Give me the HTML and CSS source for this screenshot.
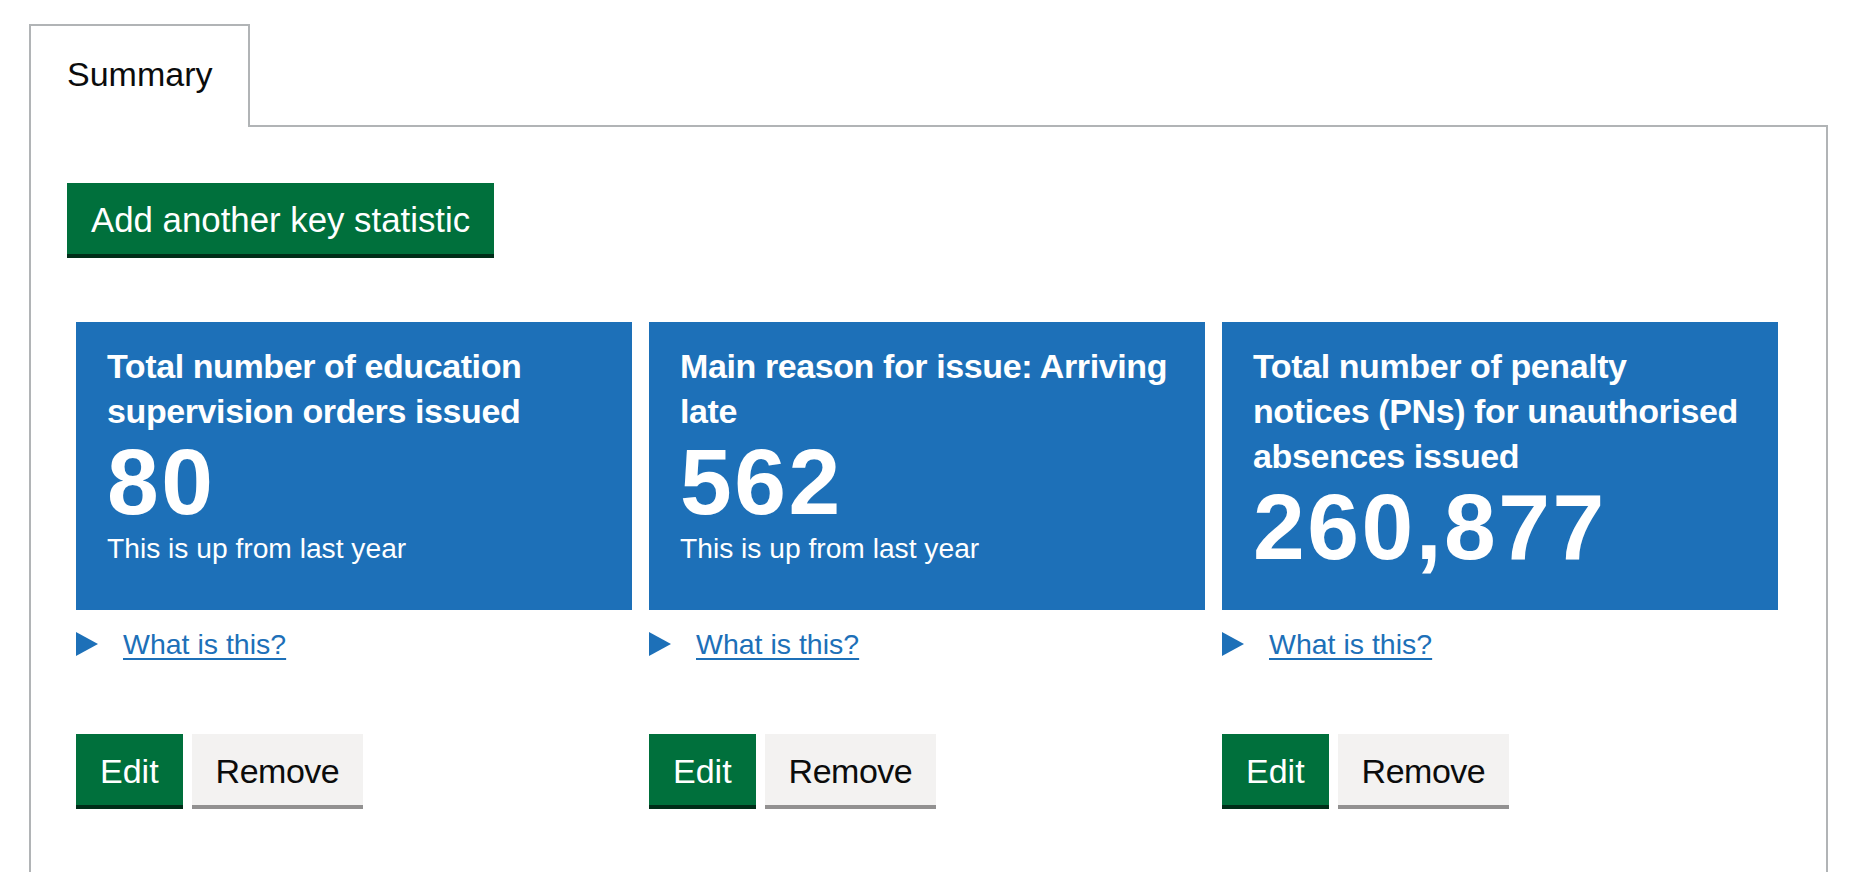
FILE: index.html
```html
<!DOCTYPE html>
<html lang="en">
<head>
<meta charset="utf-8">
<title>Key statistics – Summary</title>
<link rel="stylesheet" href="styles.css">
</head>
<body>
<div class="tabs">
  <ul class="tabs-list">
    <li class="tab tab--selected">Summary</li>
  </ul>
  <section class="panel">
    <button class="btn btn--add" type="button">Add another key statistic</button>
    <div class="stats">
      <div class="stat">
        <div class="tile">
          <h3 class="tile-title">Total number of education supervision orders issued</h3>
          <p class="tile-value">80</p>
          <p class="tile-trend">This is up from last year</p>
        </div>
        <details class="help"><summary><span class="arrow"></span><span class="help-link">What is this?</span></summary></details>
        <div class="actions">
          <button class="btn" type="button">Edit</button>
          <button class="btn btn--secondary" type="button">Remove</button>
        </div>
      </div>
      <div class="stat">
        <div class="tile">
          <h3 class="tile-title">Main reason for issue: Arriving late</h3>
          <p class="tile-value">562</p>
          <p class="tile-trend">This is up from last year</p>
        </div>
        <details class="help"><summary><span class="arrow"></span><span class="help-link">What is this?</span></summary></details>
        <div class="actions">
          <button class="btn" type="button">Edit</button>
          <button class="btn btn--secondary" type="button">Remove</button>
        </div>
      </div>
      <div class="stat">
        <div class="tile">
          <h3 class="tile-title">Total number of penalty notices (PNs) for unauthorised absences issued</h3>
          <p class="tile-value">260,877</p>
        </div>
        <details class="help"><summary><span class="arrow"></span><span class="help-link">What is this?</span></summary></details>
        <div class="actions">
          <button class="btn" type="button">Edit</button>
          <button class="btn btn--secondary" type="button">Remove</button>
        </div>
      </div>
    </div>
  </section>
</div>
</body>
</html>
```
FILE: styles.css
```css
* {
  box-sizing: border-box;
}

html,
body {
  margin: 0;
  padding: 0;
  overflow: hidden;
  background: #ffffff;
}

body {
  font-family: "Liberation Sans", Arial, sans-serif;
  color: #0b0c0c;
}

.tabs {
  width: 1799px;
  margin: 24px 0 0 29px;
}

.tabs-list {
  display: flex;
  list-style: none;
  margin: 0;
  padding: 0;
  border-bottom: 2px solid #b1b4b6;
}

.tab {
  border: 2px solid #b1b4b6;
  border-bottom: 0;
  margin-bottom: -2px;
  background: #ffffff;
  padding: 25px 36px 29px;
  font-size: 34px;
  line-height: 47px;
  color: #0b0c0c;
}

.panel {
  display: flex;
  flex-direction: column;
  align-items: flex-start;
  border: 2px solid #b1b4b6;
  border-top: 0;
  padding: 56px 36px 120px;
}

.btn {
  font-family: inherit;
  font-size: 34px;
  line-height: 34px;
  font-weight: 400;
  padding: 18px 22px 15px;
  border: 2px solid transparent;
  border-radius: 0;
  background: #00703c;
  color: #ffffff;
  box-shadow: 0 4px 0 #002d18;
  margin: 0;
  cursor: pointer;
}

.btn--add {
  font-size: 34.8px;
}

.btn--secondary {
  background: #f3f2f1;
  color: #0b0c0c;
  box-shadow: 0 4px 0 #929191;
  letter-spacing: -0.5px;
}

.stats {
  align-self: stretch;
  display: grid;
  grid-template-columns: repeat(3, 556px);
  column-gap: 17px;
  margin: 68px 0 0 9px;
}

.stat {
  display: flex;
  flex-direction: column;
}

.tile {
  flex: 1 0 auto;
  background: #1d70b8;
  color: #ffffff;
  padding: 22px 31px 35px;
}

.tile-title {
  margin: 0;
  font-size: 34px;
  line-height: 45px;
  font-weight: 700;
  letter-spacing: -0.4px;
}

.tile-value {
  margin: 0;
  font-size: 93px;
  line-height: 96px;
  font-weight: 700;
  letter-spacing: 2.5px;
}

.tile-trend {
  margin: 0;
  font-size: 28.2px;
  line-height: 36px;
}

.help {
  margin-top: 16px;
}

.help summary {
  display: flex;
  align-items: center;
  gap: 25px;
  list-style: none;
  font-size: 28.5px;
  line-height: 36px;
  color: #1d70b8;
  cursor: pointer;
}

.help summary::-webkit-details-marker {
  display: none;
}

.arrow {
  width: 0;
  height: 0;
  border-left: 22px solid #1d70b8;
  border-top: 12.5px solid transparent;
  border-bottom: 12.5px solid transparent;
}

.help-link {
  text-decoration: underline;
  text-decoration-thickness: 2px;
  text-underline-offset: 4px;
}

.actions {
  display: flex;
  gap: 9px;
  margin-top: 72px;
}
```
